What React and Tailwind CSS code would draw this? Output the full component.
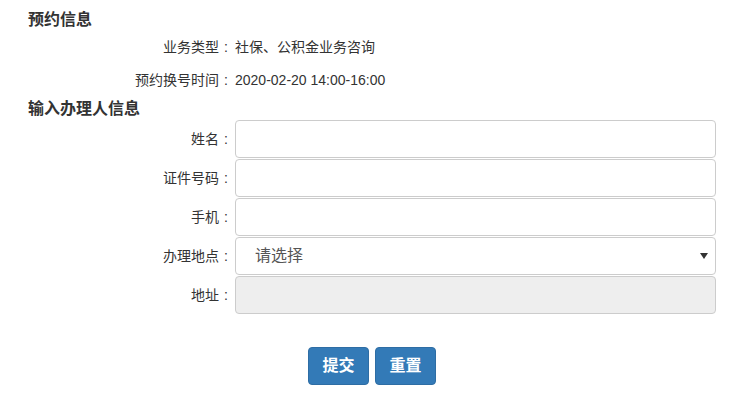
const font = { fontFamily: '"Liberation Sans", "Noto Sans CJK SC", sans-serif' };

const infoRows = [
  { label: "业务类型", value: "社保、公积金业务咨询" },
  { label: "预约换号时间", value: "2020-02-20 14:00-16:00" },
];

function Label({ text }) {
  return (
    <div className="flex w-[233px] justify-end text-[14px] text-[#333]">
      <span>{text}</span>
      <span className="w-[14px] text-center">:</span>
    </div>
  );
}

function Field({ label, children }) {
  return (
    <div className="flex items-center">
      <Label text={label} />
      <div className="ml-[2px] w-[481px]">{children}</div>
    </div>
  );
}

export default function App() {
  return (
    <div className="h-[407px] w-[755px] bg-white" style={font}>
      <div className="pt-[8px]">
        <h3 className="ml-[28px] h-[23px] text-[16px] font-bold leading-[23px] text-[#333]">预约信息</h3>

        {infoRows.map((row) => (
          <div key={row.label} className="flex h-[33px] items-center text-[14px] text-[#333]">
            <Label text={row.label} />
            <div className="ml-[2px]">{row.value}</div>
          </div>
        ))}

        <h3 className="ml-[28px] h-[23px] text-[16px] font-bold leading-[23px] text-[#333]">输入办理人信息</h3>

        <div className="flex flex-col gap-[1px]">
          <Field label="姓名">
            <input className="h-[38px] w-full rounded-[4px] border border-[#ccc] bg-white px-3 outline-none" />
          </Field>
          <Field label="证件号码">
            <input className="h-[38px] w-full rounded-[4px] border border-[#ccc] bg-white px-3 outline-none" />
          </Field>
          <Field label="手机">
            <input className="h-[38px] w-full rounded-[4px] border border-[#ccc] bg-white px-3 outline-none" />
          </Field>
          <Field label="办理地点">
            <div className="flex h-[38px] w-full items-center justify-between rounded-[4px] border border-[#ccc] bg-white pl-[19px] pr-[7px]">
              <span className="text-[16px] text-[#555]">请选择</span>
              <svg width="8" height="6" viewBox="0 0 8 6">
                <path d="M0 0 H8 L4 6 Z" fill="#333" />
              </svg>
            </div>
          </Field>
          <Field label="地址">
            <input disabled className="h-[38px] w-full rounded-[4px] border border-[#ccc] bg-[#eee] px-3 outline-none" />
          </Field>
        </div>

        <div className="ml-[308px] mt-[33px] flex gap-[6px]">
          <button className="h-[38px] w-[61px] rounded-[4px] border border-[#2e6da4] bg-[#337ab7] text-[16px] font-bold text-white">
            提交
          </button>
          <button className="h-[38px] w-[61px] rounded-[4px] border border-[#2e6da4] bg-[#337ab7] text-[16px] font-bold text-white">
            重置
          </button>
        </div>
      </div>
    </div>
  );
}
